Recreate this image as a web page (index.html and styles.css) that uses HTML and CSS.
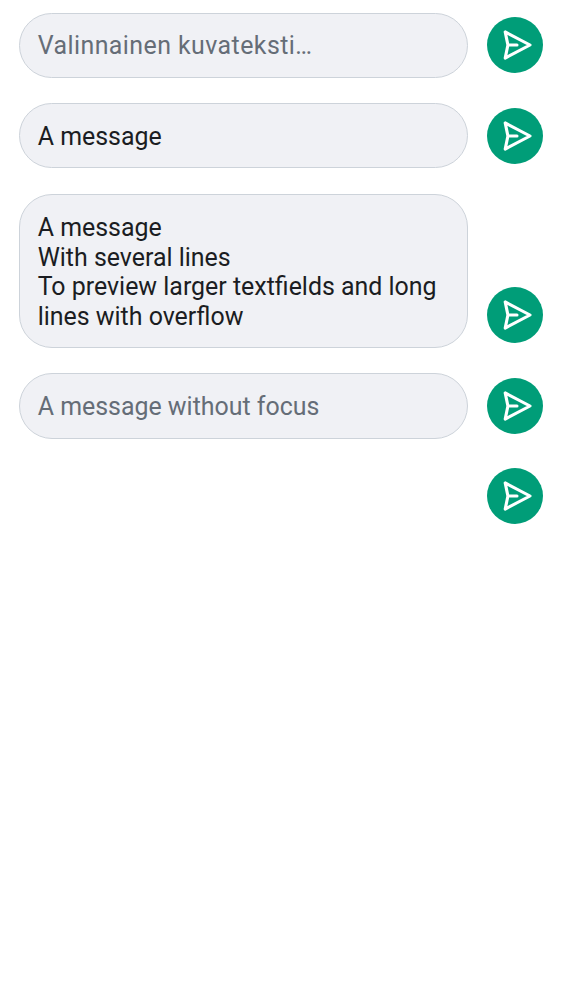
FILE: index.html
```html
<!DOCTYPE html>
<html lang="fi">
<head>
<meta charset="utf-8">
<title>Composer</title>
<link rel="stylesheet" href="styles.css">
</head>
<body>
<svg width="0" height="0" class="defs"><symbol id="send" viewBox="0 0 56 56"><path d="M18.2 14.9 43 28 18.2 41.1 20.9 28ZM20.9 28H30" fill="none" stroke="#fff" stroke-width="3.1" stroke-linejoin="round" stroke-linecap="round"/></symbol></svg>
<main class="list">
<div class="row"><div class="field placeholder caption">Valinnainen kuvateksti…</div><button class="send" aria-label="Send"><svg><use href="#send"/></svg></button></div>
<div class="row"><div class="field">A message</div><button class="send" aria-label="Send"><svg><use href="#send"/></svg></button></div>
<div class="row"><div class="field">A message<br>With several lines<br>To preview larger textfields and long<br>lines with overflow</div><button class="send" aria-label="Send"><svg><use href="#send"/></svg></button></div>
<div class="row"><div class="field placeholder">A message without focus</div><button class="send" aria-label="Send"><svg><use href="#send"/></svg></button></div>
<div class="row"><button class="send" aria-label="Send"><svg><use href="#send"/></svg></button></div>
</main>
</body>
</html>
```
FILE: styles.css
```css
body { margin: 0; background: #fff; font-family: Roboto, sans-serif; }
.defs { display: block; }
.list { display: flex; flex-direction: column; gap: 25.3px; padding: 12.8px 19px; }
.row { display: flex; align-items: flex-end; justify-content: flex-end; gap: 19px; min-height: 65.2px; }
.field { box-sizing: border-box; width: 449px; min-height: 65.2px; padding: 18.1px 18px 15.4px 17.7px; border: 1px solid #cdd3da; border-radius: 33px; background: #f0f1f5; color: #1b1d22; font-size: 24.93px; line-height: 29.7px; white-space: nowrap; }
.placeholder { padding-top: 17.5px; color: #656d77; }
.caption { padding-top: 17px; letter-spacing: .44px; }
.send { flex: none; width: 56px; height: 56px; margin: 0 0 4.6px; padding: 0; border: 0; border-radius: 50%; background: #009d78; }
.send svg { display: block; width: 56px; height: 56px; }
```
